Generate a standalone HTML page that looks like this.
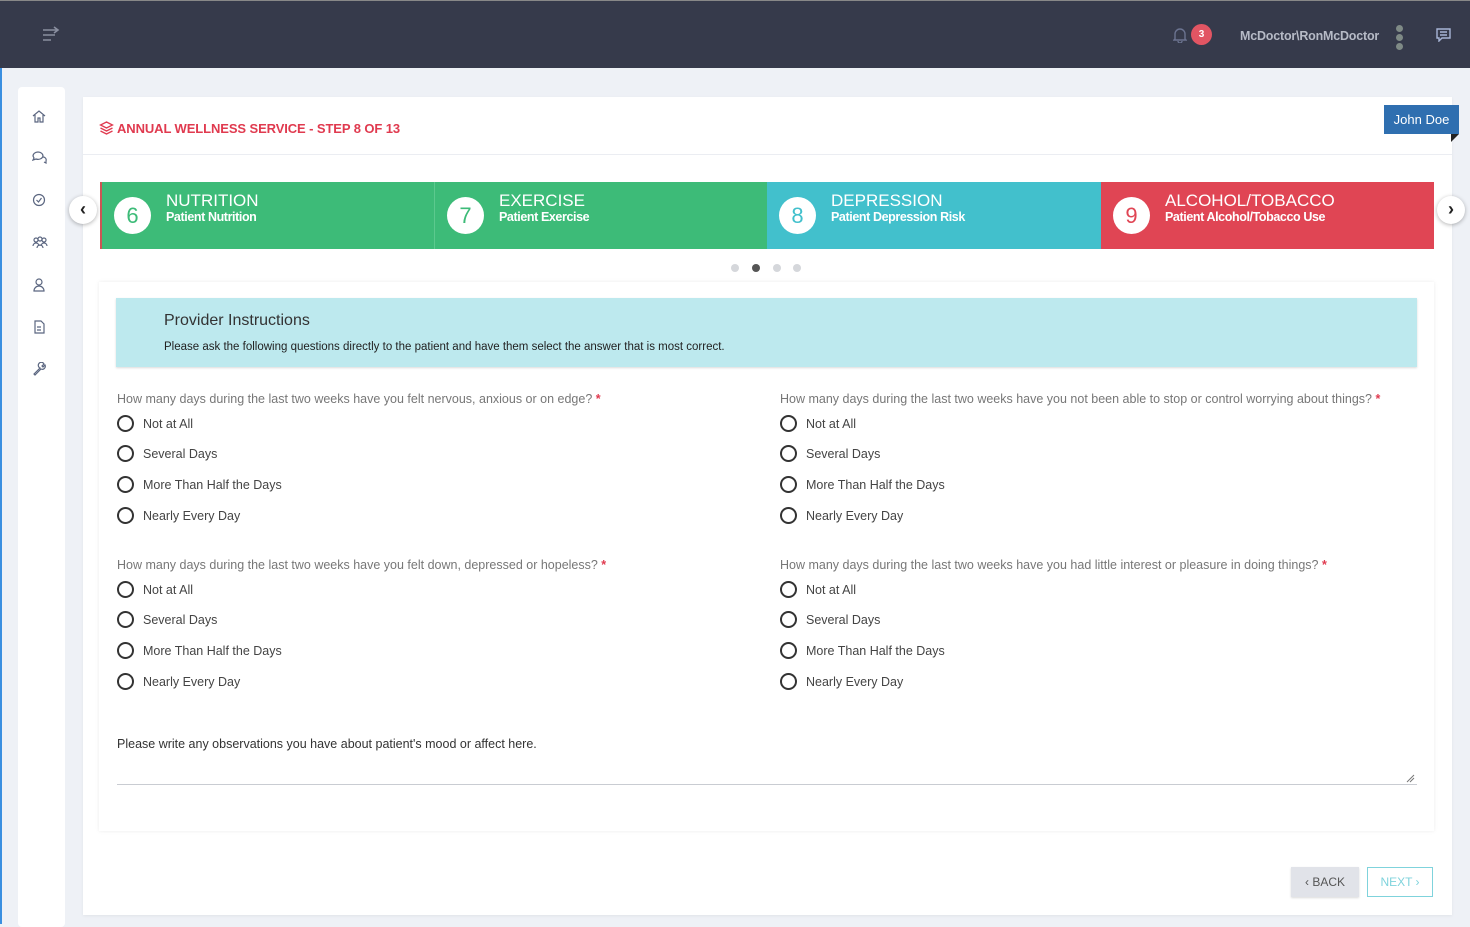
<!DOCTYPE html>
<html><head><meta charset="utf-8"><style>
*{box-sizing:border-box;margin:0;padding:0}
body{width:1470px;height:924px;background:#eef1f6;font-family:"Liberation Sans",sans-serif;position:relative;overflow:hidden;color:#333}
.abs{position:absolute}
.hdr{left:0;top:0;width:1470px;height:68px;background:#363a4b;border-top:1px solid #888}
.blue{left:0;top:68px;width:2px;height:856px;background:#3a8fe0}
.side{left:18px;top:87px;width:47px;height:840px;background:#fff;border-radius:4px}
.side svg{position:absolute;left:14px}
.card{left:83px;top:97px;width:1369px;height:818px;background:#fff;box-shadow:0 1px 3px rgba(0,0,0,.06)}
.title{left:117px;top:121px;color:#e03a4f;font-weight:bold;font-size:13px;letter-spacing:-.1px}
.hline{left:83px;top:154px;width:1369px;height:1px;background:#ebedf2}
.jd{left:1384px;top:105px;width:75px;height:29px;background:#2f6fb0;color:#fff;font-size:13px;line-height:30px;text-align:center}
.step{top:182px;height:67px;color:#fff}
.step .c{position:absolute;left:12px;top:15px;width:37px;height:37px;border-radius:50%;background:#fff;font-size:22px;text-align:center;line-height:37px}
.step .t{position:absolute;left:64px;top:9px;font-size:17px}
.step .s{position:absolute;left:64px;top:28px;font-size:12.5px;font-weight:bold;letter-spacing:-.4px}
.arr{width:28px;height:28px;border-radius:50%;background:#fff;box-shadow:0 1px 4px rgba(0,0,0,.3);text-align:center;line-height:26px;font-size:18px;font-weight:bold;color:#222}
.dot{top:264px;width:8px;height:8px;border-radius:50%;background:#d5d7db}
.inner{left:99px;top:282px;width:1335px;height:549px;background:#fff;box-shadow:0 0 4px rgba(0,0,0,.08)}
.instr{left:116px;top:298px;width:1301px;height:69px;background:#bde9ee;box-shadow:0 1px 2px rgba(0,0,0,.15)}
.q{font-size:12.5px;color:#777}
.q b{color:#e03a4f}
.o{font-size:12.5px;color:#444}
.r{width:17px;height:17px;border:2px solid #333;border-radius:50%}
.btn{top:867px;height:30px;font-size:12px;line-height:30px;text-align:center}
</style></head><body>
<div class="abs hdr"></div>
<svg class="abs" style="left:42px;top:26px" width="20" height="16" viewBox="0 0 20 16" fill="none" stroke="#8a8fa0" stroke-width="1.6"><path d="M1 4h10M1 9h12M1 14h8M12 1l4 3-4 3M6 4h10"/></svg>
<svg class="abs" style="left:1173px;top:27px" width="14" height="16" viewBox="0 0 14 16" fill="none" stroke="#6b7390" stroke-width="1.4"><path d="M2 12V7a5 5 0 0110 0v5l1 1H1z M5 14a2 2 0 004 0"/></svg>
<div class="abs" style="left:1191px;top:24px;width:21px;height:21px;border-radius:50%;background:#e25563;color:#fff;font-size:10px;font-weight:bold;text-align:center;line-height:21px">3</div>
<div class="abs" style="left:1240px;top:29px;color:#b6bac6;font-size:12.5px;font-weight:bold;letter-spacing:-.2px">McDoctor\RonMcDoctor</div>
<div class="abs" style="left:1396px;top:25px;width:7px;height:7px;border-radius:50%;background:#7f8a86"></div>
<div class="abs" style="left:1396px;top:34px;width:7px;height:7px;border-radius:50%;background:#7f8a86"></div>
<div class="abs" style="left:1396px;top:43px;width:7px;height:7px;border-radius:50%;background:#7f8a86"></div>
<svg class="abs" style="left:1436px;top:28px" width="15" height="14" viewBox="0 0 15 14" fill="none" stroke="#a7b4d6" stroke-width="1.4"><path d="M1 1h13v9H6l-3 3v-3H1z M4 4h7M4 7h7"/></svg>
<div class="abs blue"></div>
<div class="abs side">
<svg style="top:22px" width="14" height="14" viewBox="0 0 14 14" fill="none" stroke="#5b6680" stroke-width="1.2"><path d="M1 7l6-5 6 5M3 6v7h3V9h2v4h3V6"/></svg>
<svg style="top:64px" width="15" height="14" viewBox="0 0 15 14" fill="none" stroke="#5b6680" stroke-width="1.2"><path d="M1 5a5 4 0 0110 0 5 4 0 01-7 3l-3 1 1-2z M11 6a3 3 0 013 4l0 2-2-1"/></svg>
<svg style="top:106px" width="14" height="14" viewBox="0 0 14 14" fill="none" stroke="#5b6680" stroke-width="1.2"><circle cx="7" cy="7" r="5.5"/><path d="M4.5 7l2 2 3-4"/></svg>
<svg style="top:149px" width="16" height="14" viewBox="0 0 16 14" fill="none" stroke="#5b6680" stroke-width="1.2"><circle cx="4" cy="4" r="2"/><circle cx="8" cy="3" r="2"/><circle cx="12" cy="4" r="2"/><path d="M1 10a3 3 0 016 0M5 12a3 3 0 016 0M9 10a3 3 0 016 0"/></svg>
<svg style="top:191px" width="14" height="14" viewBox="0 0 14 14" fill="none" stroke="#5b6680" stroke-width="1.2"><circle cx="7" cy="4" r="3"/><path d="M2 13a5 5 0 0110 0z"/></svg>
<svg style="top:233px" width="14" height="14" viewBox="0 0 14 14" fill="none" stroke="#5b6680" stroke-width="1.2"><path d="M3 1h6l3 3v9H3z M5 7h4M5 10h4"/></svg>
<svg style="top:275px" width="14" height="14" viewBox="0 0 14 14" fill="none" stroke="#5b6680" stroke-width="1.2"><path d="M2 12l6-6a3 3 0 114 -4l-2 2 1 1 2-2a3 3 0 01-4 4l-6 6z"/></svg>
</div>
<div class="abs card"></div>
<svg class="abs" style="left:99px;top:121px" width="15" height="15" viewBox="0 0 15 15" fill="none" stroke="#e03a4f" stroke-width="1.3"><path d="M7.5 1l6 3-6 3-6-3z M1.5 7l6 3 6-3 M1.5 10l6 3 6-3"/></svg>
<div class="abs title">ANNUAL WELLNESS SERVICE - STEP 8 OF 13</div>
<div class="abs hline"></div>
<div class="abs jd">John Doe</div>
<div class="abs" style="left:1451px;top:134px;width:0;height:0;border-top:8px solid #222;border-right:8px solid transparent"></div>
<div class="abs step" style="left:100px;width:334px;background:#3dbb78;border-left:2px solid #c55"><div class="c" style="color:#3dbb78">6</div><div class="t">NUTRITION</div><div class="s">Patient Nutrition</div></div>
<div class="abs step" style="left:434px;width:333px;background:#3dbb78;border-left:1px solid #5cc98e"><div class="c" style="color:#3dbb78">7</div><div class="t">EXERCISE</div><div class="s">Patient Exercise</div></div>
<div class="abs step" style="left:767px;width:334px;background:#42c0cc"><div class="c" style="color:#42c0cc">8</div><div class="t">DEPRESSION</div><div class="s">Patient Depression Risk</div></div>
<div class="abs step" style="left:1101px;width:333px;background:#e04554"><div class="c" style="color:#e04554">9</div><div class="t">ALCOHOL/TOBACCO</div><div class="s">Patient Alcohol/Tobacco Use</div></div>
<div class="abs arr" style="left:69px;top:196px">&#8249;</div>
<div class="abs arr" style="left:1437px;top:196px">&#8250;</div>
<div class="abs dot" style="left:731px"></div>
<div class="abs dot" style="left:752px;background:#555"></div>
<div class="abs dot" style="left:773px"></div>
<div class="abs dot" style="left:793px"></div>
<div class="abs inner"></div>
<div class="abs instr"><div class="abs" style="left:48px;top:14px;font-size:16px;color:#333">Provider Instructions</div><div class="abs" style="left:48px;top:43px;font-size:11.5px;color:#222">Please ask the following questions directly to the patient and have them select the answer that is most correct.</div></div>

<div class="abs q" style="left:117px;top:392px">How many days during the last two weeks have you felt nervous, anxious or on edge? <b>*</b></div>
<div class="abs q" style="left:780px;top:392px">How many days during the last two weeks have you not been able to stop or control worrying about things? <b>*</b></div>
<div class="abs q" style="left:117px;top:558px">How many days during the last two weeks have you felt down, depressed or hopeless? <b>*</b></div>
<div class="abs q" style="left:780px;top:558px">How many days during the last two weeks have you had little interest or pleasure in doing things? <b>*</b></div>

<div id="opts"></div>
<script>
var L=["Not at All","Several Days","More Than Half the Days","Nearly Every Day"],Y=[424,454,485,516],h="";
[[117,0],[780,0],[117,166],[780,166]].forEach(function(p){L.forEach(function(t,i){var y=Y[i]+p[1];h+='<div class="abs r" style="left:'+p[0]+'px;top:'+(y-9)+'px"></div><div class="abs o" style="left:'+(p[0]+26)+'px;top:'+(y-7)+'px">'+t+'</div>';});});
document.getElementById("opts").innerHTML=h;
</script>
<div class="abs o" style="left:117px;top:737px;color:#333">Please write any observations you have about patient's mood or affect here.</div>
<div class="abs" style="left:117px;top:784px;width:1300px;height:1px;background:#c9ccd2"></div>
<svg class="abs" style="left:1406px;top:774px" width="9" height="9" viewBox="0 0 9 9" stroke="#777"><path d="M1 8L8 1M4 8L8 4"/></svg>
<div class="abs btn" style="left:1291px;width:68px;background:#e1e3e9;color:#555;box-shadow:0 1px 2px rgba(0,0,0,.15)">&#8249; BACK</div>
<div class="abs btn" style="left:1367px;width:66px;border:1px solid #7fd3dc;color:#7fd3dc;line-height:28px">NEXT &#8250;</div>
</body></html>
